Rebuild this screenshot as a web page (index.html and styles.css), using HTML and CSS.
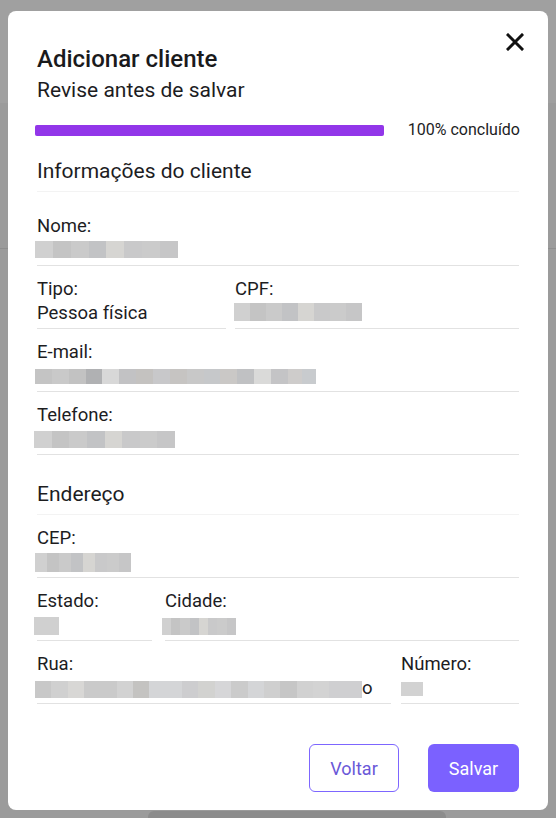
FILE: index.html
```html
<!DOCTYPE html>
<html lang="pt-BR">
<head>
    <meta charset="UTF-8">
    <title>Adicionar cliente</title>
    <link rel="stylesheet" href="styles.css">
</head>
<body>
    <!-- page behind the overlay -->
    <div class="page">
        <div class="page-top"></div>
        <div class="page-band"></div>
        <div class="page-foot"></div>
    </div>

    <div class="overlay">
        <div class="modal">
            <button class="close" aria-label="Fechar">
                <svg width="18" height="18" viewBox="0 0 18 18">
                    <path d="M2 2 L16 16 M16 2 L2 16" stroke="#111" stroke-width="3" stroke-linecap="square" fill="none"/>
                </svg>
            </button>

            <h2 class="title">Adicionar cliente</h2>
            <p class="subtitle">Revise antes de salvar</p>

            <div class="progress">
                <div class="progress-bar"><div class="progress-fill" style="width: 100%;"></div></div>
                <span class="progress-text">100% concluído</span>
            </div>

            <h3 class="section">Informações do cliente</h3>
            <div class="fields">
                <div class="field">
                    <div class="label">Nome:</div>
                    <div class="value"><span class="blur w-nome"></span></div>
                </div>
                <div class="row row-tipo">
                    <div class="field">
                        <div class="label">Tipo:</div>
                        <div class="value">Pessoa física</div>
                    </div>
                    <div class="field">
                        <div class="label">CPF:</div>
                        <div class="value"><span class="blur w-cpf"></span></div>
                    </div>
                </div>
                <div class="field">
                    <div class="label">E-mail:</div>
                    <div class="value"><span class="blur w-email"></span></div>
                </div>
                <div class="field">
                    <div class="label">Telefone:</div>
                    <div class="value"><span class="blur w-tel"></span></div>
                </div>
            </div>

            <h3 class="section section-2">Endereço</h3>
            <div class="fields fields-2">
                <div class="field">
                    <div class="label">CEP:</div>
                    <div class="value"><span class="blur w-cep"></span></div>
                </div>
                <div class="row row-estado">
                    <div class="field">
                        <div class="label">Estado:</div>
                        <div class="value"><span class="blur w-uf"></span></div>
                    </div>
                    <div class="field">
                        <div class="label">Cidade:</div>
                        <div class="value"><span class="blur w-cidade"></span></div>
                    </div>
                </div>
                <div class="row row-rua">
                    <div class="field">
                        <div class="label">Rua:</div>
                        <div class="value"><span class="blur w-rua"></span>o</div>
                    </div>
                    <div class="field">
                        <div class="label">Número:</div>
                        <div class="value"><span class="blur w-num"></span></div>
                    </div>
                </div>
            </div>

            <div class="actions">
                <button class="btn btn-outline">Voltar</button>
                <button class="btn btn-primary">Salvar</button>
            </div>
        </div>
    </div>
</body>
</html>
```

FILE: styles.css
```css
body {
    margin: 0;
    font-family: Roboto, "Liberation Sans", sans-serif;
    color: #1d1d1f;
    background: #9b9b9b;
    height: 818px;
    overflow: hidden;
}

/* background page, dimmed */
.page {
    height: 818px;
}

.page-top {
    height: 103px;
    background: #a0a0a0;
}

.page-band {
    height: 145px;
    border-bottom: 1px solid #8e8e8e;
}

.page-foot {
    margin: 562px 0 0 148px;
    width: 298px;
    height: 8px;
    background: #8c8c8c;
    border-radius: 6px 6px 0 0;
}

.overlay {
    position: absolute;
    top: 0;
    left: 0;
    right: 0;
}

.modal {
    position: relative;
    margin: 11px 8px 0;
    height: 799px;
    box-sizing: border-box;
    padding: 34px 29px 0;
    background: #fff;
    border-radius: 8px;
}

.close {
    position: absolute;
    top: 22px;
    right: 24px;
    padding: 0;
    border: 0;
    background: none;
    line-height: 0;
}

.title {
    margin: 0;
    font-size: 24px;
    font-weight: 500;
    line-height: 28px;
    color: #1a1a1c;
}

.subtitle {
    margin: 4px 0 0;
    font-size: 21px;
    line-height: 26px;
}

.progress {
    display: flex;
    align-items: center;
    margin: 17px 0 0 -2px;
}

.progress-bar {
    width: 349px;
    height: 11px;
    border-radius: 2px;
    background: #eee;
}

.progress-fill {
    height: 100%;
    border-radius: 2px;
    background: #9236e9;
}

.progress-text {
    margin-left: auto;
    margin-right: -1px;
    font-size: 16px;
    line-height: 20px;
}

.section {
    margin: 18px 0 0;
    padding-bottom: 7px;
    border-bottom: 1px solid #f3f3f3;
    font-size: 21px;
    font-weight: 400;
    line-height: 26px;
}

.section-2 {
    margin-top: 26px;
}

.fields {
    display: flex;
    flex-direction: column;
    gap: 12px;
    margin-top: 23px;
}

.fields-2 {
    margin-top: 12px;
}

.field {
    padding-bottom: 4px;
    border-bottom: 1px solid #e2e2e2;
}

.row {
    display: grid;
    gap: 9px;
}

.row-tipo {
    grid-template-columns: 189px 1fr;
}

.row-estado {
    grid-template-columns: 115px 1fr;
    gap: 13px;
}

.row-rua {
    grid-template-columns: 354px 1fr;
    gap: 10px;
}

.label,
.value {
    font-size: 18.5px;
    line-height: 22px;
    height: 22px;
}

.value {
    margin-top: 2px;
}

/* pixelated, hidden data */
.blur {
    display: inline-block;
    vertical-align: top;
    height: 17px;
    margin: 2px 0 0 -2px;
    background: linear-gradient(90deg,
        #d0d0d0 0 12.5%, #c4c4c4 0 25%, #cacaca 0 37.5%, #c2c3c5 0 50%,
        #d6d5d2 0 62.5%, #c9c9ca 0 75%, #cbcbcb 0 87.5%, #c6c6c7 0);
}

.w-nome { width: 143px; }
.w-cpf { width: 128px; height: 18px; margin: 1px 0 0 -1px; }
.w-tel { width: 141px; margin: 3px 0 0 -3px; }
.w-cep { width: 96px; height: 19px; }
.w-uf { width: 25px; height: 18px; margin: 3px 0 0 -3px; background: #d0d0d0; }
.w-cidade { width: 74px; margin: 4px 0 0 -3px; }
.w-num { width: 22px; height: 14px; margin: 5px 0 0 0; background: #d2d2d2; }

.w-email {
    width: 281px;
    height: 15px;
    margin-top: 4px;
    background: linear-gradient(90deg,
        #c4c4c4 0 6%, #c9c9c9 0 12%, #c2c2c2 0 18%, #b0b1b3 0 24%, #d8d8d8 0 30%,
        #c2c2c4 0 36%, #c4c2c0 0 42%, #c8c8ca 0 48%, #c6c4c2 0 54%, #c8c8c8 0 60%,
        #c6c8ca 0 66%, #cac8c6 0 72%, #c0c1c3 0 78%, #dadad9 0 84%, #c4c4c6 0 90%,
        #cecccb 0 95%, #c8cbce 0);
}

.w-rua {
    width: 327px;
    margin-top: 4px;
    background: linear-gradient(90deg,
        #c8c8c8 0 5%, #d0d0d0 0 10%, #d8d7d5 0 15%, #cacaca 0 25%, #d2d2d2 0 30%,
        #c4c3c1 0 35%, #d4d5d7 0 45%, #cdcdcf 0 50%, #d2d2d0 0 55%, #d6d6d8 0 60%,
        #cbcbcb 0 65%, #d4d5d7 0 70%, #cfcfcf 0 75%, #c6c6c6 0 80%, #d1d1d1 0 85%,
        #d3d3d3 0 90%, #cfcfd1 0);
}

.actions {
    display: flex;
    justify-content: flex-end;
    gap: 29px;
    margin-top: 40px;
}

.btn {
    height: 48px;
    border-radius: 6px;
    font-family: inherit;
    font-size: 18px;
    cursor: pointer;
}

.btn-outline {
    width: 90px;
    border: 1px solid #7d66ff;
    background: #fff;
    color: #6a58d8;
}

.btn-primary {
    width: 91px;
    border: 0;
    background: #7b61ff;
    color: #fff;
}
```
